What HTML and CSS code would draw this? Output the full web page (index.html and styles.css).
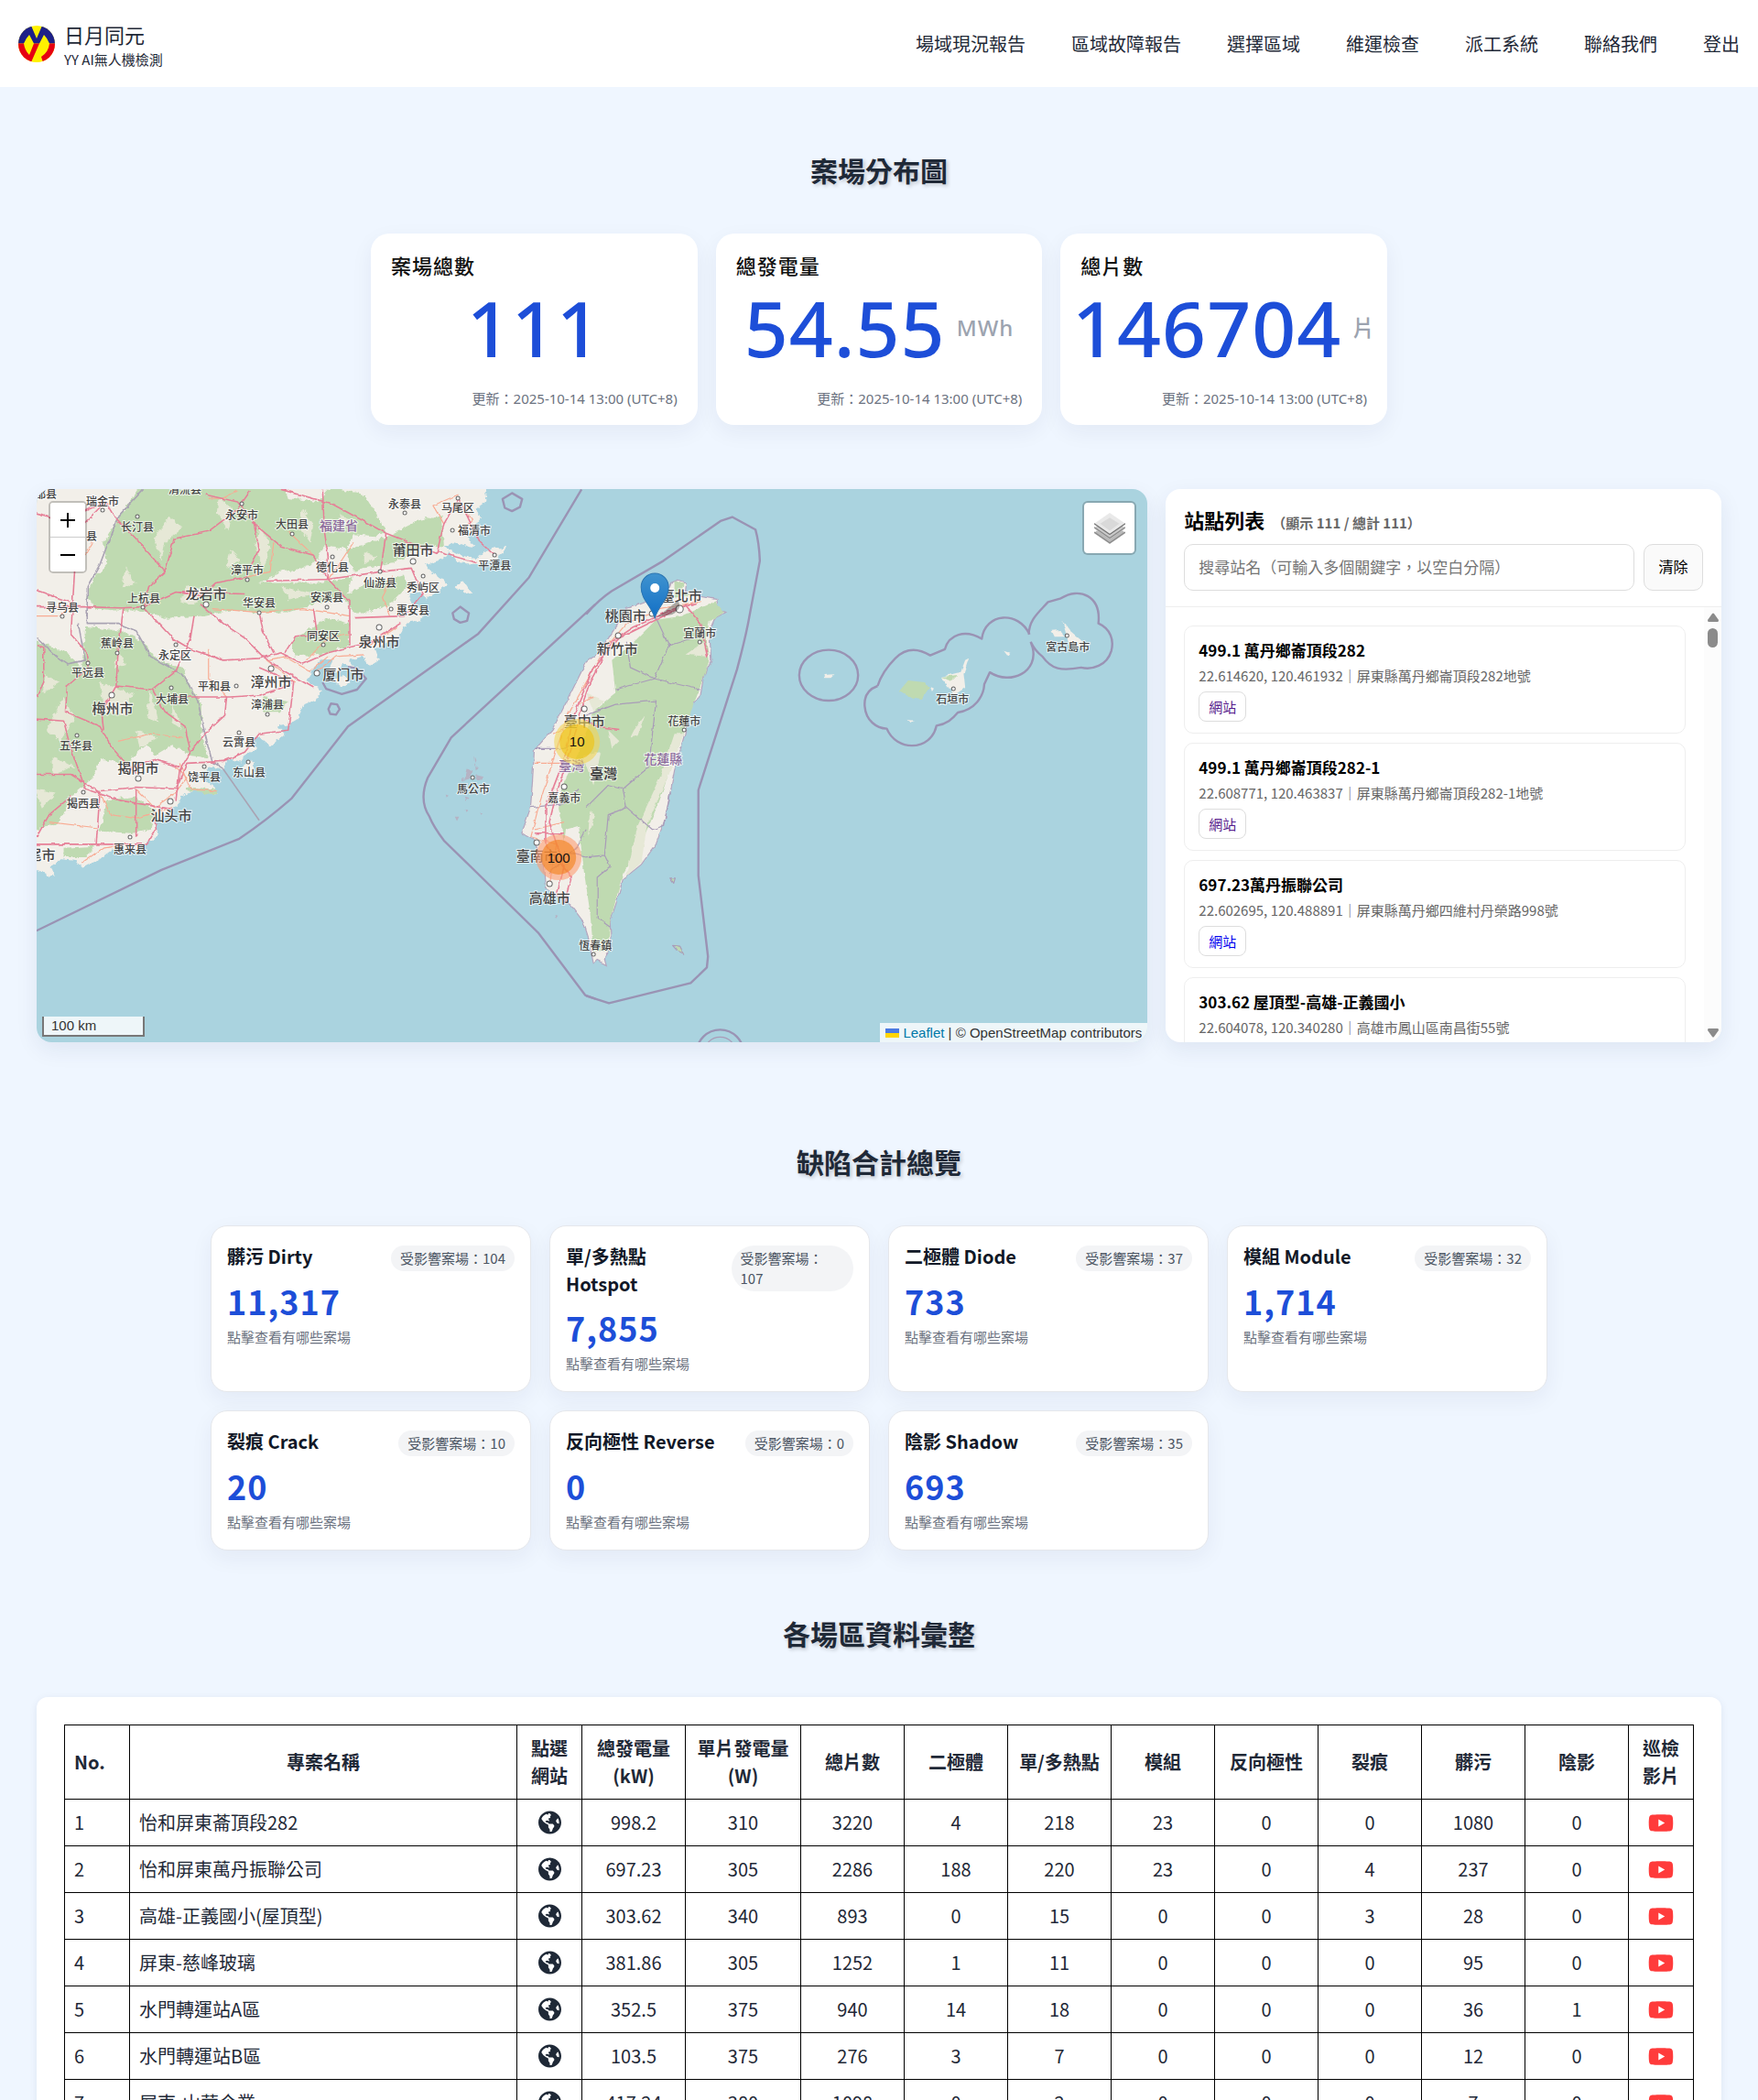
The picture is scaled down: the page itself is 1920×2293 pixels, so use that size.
FILE: index.html
```html
<!DOCTYPE html>
<html lang="zh-Hant">
<head>
<meta charset="UTF-8">
<meta name="viewport" content="width=device-width, initial-scale=1.0">
<title>日月同元 YY AI無人機檢測</title>
<link rel="stylesheet" href="styles.css">
</head>
<body>

<!-- shared icons -->
<svg class="sprite" aria-hidden="true">
    <symbol id="icon-globe" viewBox="0 0 496 512">
        <path d="M248 8C111.03 8 0 119.03 0 256s111.03 248 248 248 248-111.03 248-248S384.97 8 248 8zm82.29 357.6c-3.9 3.88-7.99 7.95-11.31 11.28-2.99 3-5.1 6.7-6.17 10.71-1.51 5.66-2.73 11.38-4.77 16.87l-17.39 46.85c-13.76 3-28 4.69-42.65 4.69v-27.38c1.69-12.62-7.64-36.26-22.63-51.25-6-6-9.37-14.14-9.37-22.63v-32.01c0-11.64-6.27-22.34-16.46-27.97-14.37-7.95-34.81-19.06-48.81-26.11-11.48-5.78-22.1-13.14-31.65-21.75l-.8-.72a114.792 114.792 0 0 1-18.06-20.74c-9.38-13.77-24.66-36.42-34.59-51.14 20.47-45.5 57.36-82.04 103.2-101.89l24.01 12.01C203.48 89.74 216 82.01 216 70.11v-11.3c7.99-1.29 16.12-2.11 24.39-2.42l28.3 28.3c6.25 6.25 6.25 16.38 0 22.63L264 112l-10.34 10.34c-3.12 3.12-3.12 8.19 0 11.31l4.69 4.69c3.12 3.12 3.12 8.19 0 11.31l-8 8a8.008 8.008 0 0 1-5.66 2.34h-8.99c-2.08 0-4.08.81-5.58 2.27l-9.92 9.65a8.008 8.008 0 0 0-1.58 9.31l15.59 31.19c2.66 5.32-1.21 11.58-7.15 11.58h-5.64c-1.93 0-3.79-.7-5.24-1.96l-9.28-8.06a16.017 16.017 0 0 0-15.55-3.1l-31.17 10.39a11.95 11.95 0 0 0-8.17 11.34c0 4.53 2.56 8.66 6.61 10.69l11.08 5.54c9.41 4.71 19.79 7.16 30.31 7.16s22.59 27.29 32 32h66.75c8.49 0 16.62 3.37 22.63 9.37l13.69 13.69a30.503 30.503 0 0 1 8.93 21.57 46.536 46.536 0 0 1-13.72 32.98zM417 274.25c-5.79-1.45-10.84-5-14.15-9.97l-17.98-26.97a23.97 23.97 0 0 1 0-26.62l19.59-29.38c2.32-3.47 5.5-6.29 9.24-8.15l12.98-6.49C440.2 193.59 448 223.87 448 256c0 8.67-.74 17.16-1.82 25.54L417 274.25z"/>
    </symbol>
    <symbol id="icon-youtube" viewBox="0 0 576 512">
        <path d="M549.655 124.083c-6.281-23.65-24.787-42.276-48.284-48.597C458.781 64 288 64 288 64S117.22 64 74.629 75.486c-23.497 6.322-42.003 24.947-48.284 48.597-11.412 42.867-11.412 132.305-11.412 132.305s0 89.438 11.412 132.305c6.281 23.65 24.787 41.5 48.284 47.821C117.22 448 288 448 288 448s170.78 0 213.371-11.486c23.497-6.321 42.003-24.171 48.284-47.821 11.412-42.867 11.412-132.305 11.412-132.305s0-89.438-11.412-132.305zm-317.51 213.508V175.185l142.739 81.205-142.739 81.201z"/>
    </symbol>
</svg>

<header class="navbar">
    <a class="brand" href="#">
        <svg class="brand-logo" viewBox="0 0 40 40" aria-hidden="true">
            <defs><clipPath id="logoClip"><circle cx="20" cy="20" r="20"/></clipPath></defs>
            <g clip-path="url(#logoClip)">
                <rect width="40" height="40" fill="#fff100"/>
                <path d="M0 19.500V0H14L20 14L26 0H40V19.500H34Q32 14 28 10L23 19.500H17L12 10Q8 14 6 19.500Z" fill="#1d2088"/>
                <path d="M0 19.500H6Q7 27 12 32L17 19.500H23L14 40H0ZM34 19.500H40V40H27L25 34Q33 29 34 19.500Z" fill="#e60012"/>
            </g>
        </svg>
        <span class="brand-text">
            <span class="brand-name">日月同元</span>
            <span class="brand-sub">YY AI無人機檢測</span>
        </span>
    </a>
    <nav class="nav-links">
        <a href="#">場域現況報告</a>
        <a href="#">區域故障報告</a>
        <a href="#">選擇區域</a>
        <a href="#">維運檢查</a>
        <a href="#">派工系統</a>
        <a href="#">聯絡我們</a>
        <a href="#">登出</a>
    </nav>
</header>

<main>
    <section class="sites">
        <h2 class="section-title">案場分布圖</h2>

        <div class="stats">
            <div class="stat-card">
                <h3>案場總數</h3>
                <div class="stat-value"><span class="num">111</span></div>
                <div class="stat-time">更新：2025-10-14 13:00 (UTC+8)</div>
            </div>
            <div class="stat-card">
                <h3>總發電量</h3>
                <div class="stat-value"><span class="num">54.55</span><span class="unit">MWh</span></div>
                <div class="stat-time">更新：2025-10-14 13:00 (UTC+8)</div>
            </div>
            <div class="stat-card">
                <h3>總片數</h3>
                <div class="stat-value"><span class="num">146704</span><span class="unit">片</span></div>
                <div class="stat-time">更新：2025-10-14 13:00 (UTC+8)</div>
            </div>
        </div>

        <div class="map-layout">
            <div class="map">
                <svg class="map-canvas" viewBox="0 0 1213 604" preserveAspectRatio="xMidYMid slice" role="img" aria-label="案場地圖">
                    <defs>
                        <filter id="rough" x="-5%" y="-5%" width="110%" height="110%">
                            <feTurbulence type="fractalNoise" baseFrequency="0.06" numOctaves="4" seed="4" result="n"/>
                            <feDisplacementMap in="SourceGraphic" in2="n" scale="16" xChannelSelector="R" yChannelSelector="G"/>
                        </filter>
                        <filter id="wobble" x="-5%" y="-5%" width="110%" height="110%">
                            <feTurbulence type="fractalNoise" baseFrequency="0.05" numOctaves="2" seed="9" result="n"/>
                            <feDisplacementMap in="SourceGraphic" in2="n" scale="9" xChannelSelector="R" yChannelSelector="G"/>
                        </filter>
                        <linearGradient id="pinFill" x1="0" y1="0" x2="0" y2="1">
                            <stop offset="0" stop-color="#3f93cf"/>
                            <stop offset="1" stop-color="#126fc6"/>
                        </linearGradient>
                    </defs>
                    <rect width="1213" height="604" fill="#aad3df"/>

                    <!-- mainland coast -->
                    <g transform="translate(-10 -14) scale(.3954 .4018)">
                        <g filter="url(#rough)">
                            <path class="land" d="M-20 0H1260L1268 70 1240 90 1250 120 1215 165 1235 195 1180 180 1150 190 1195 215 1240 225 1260 205 1290 195 1325 195 1290 225 1250 240 1190 235 1165 205 1150 225 1100 240 1115 265 1150 280 1160 295 1130 315 1100 335 1085 315 1050 320 1060 345 1105 370 1080 395 1045 400 1030 430 1000 450 960 470 970 500 945 515 925 490 890 500 905 520 870 510 860 535 830 530 845 500 820 495 790 520 770 555 812 580 800 605 765 620 745 660 720 675 690 680 710 700 670 735 650 720 640 705 620 715 632 740 600 760 590 775 555 768 540 795 500 790 470 810 520 850 525 865 460 855 425 870 415 890 395 905 355 935 360 980 320 1000 290 1020 240 1010 200 1040 150 1065 135 1045 90 1040 65 1060 75 1090 40 1075 15 1065 -20 1060Z"/>
                            <path class="land" d="M1180 300l25-15 20 30-15 5zM590 790l30-20 5 35-20 15zM840 555l35-15 15 20-25 15z"/>
                        </g>
                        <g filter="url(#rough)" class="wood">
                            <path d="M330 0H700L720 60 800 70 840 30 930 50 990 150 960 165 900 160 880 200 820 190 800 230 760 250 700 260 640 290 800 290 900 275 880 330 800 345 720 370 640 370 560 365 480 380 380 385 300 365 240 365 190 360 165 330 180 280 220 240 210 180 240 130Z"/>
                            <path d="M990 165L1080 120 1145 105 1150 190 1100 190 1010 235 900 255 880 200ZM740 440L830 385 890 400 890 460 830 480 740 490 725 460ZM870 330L940 290 1040 270 1050 300 1000 350 940 370 900 370Z"/>
                            <path d="M0 440L110 480 150 520 160 410 260 420 320 450 360 500 430 520 450 570 480 620 480 700 500 765 450 760 400 730 350 760 330 730 270 780 200 770 180 820 120 870 90 940 0 970ZM220 880L300 870 350 910 340 960 290 970 200 965ZM650 600L720 610 700 640 650 640ZM440 845l85 5v15l-85-8zM100 1010l90-5-30 30-60 0z"/>
                        </g>
                        <g filter="url(#rough)" class="clearing">
                            <path d="M390 110l40 30-50 40-10 50-20-60zM530 60l40 30-15 60-30-50zM640 130l30 60-20 60-20-60zM760 90l30 40-10 50-30-40zM560 200l30 30-40 20zM270 250l30 40-40 15zM440 300l50 10-30 40-40-10zM860 100l30 20-20 20zM700 300l90 20-70 15zM930 210l40 10-40 20z"/>
                            <path d="M200 560l90 30-20 60-60-10zM100 600l30 60-40 60-40-30zM340 580l20 90-30-20zM300 690l60 20-50 30zM70 760l60 30-60 20zM250 470l20 40-30 10zM400 620l30 70-30-20zM20 850l60 10-40 40zM50 540l40 20-50 30z"/>
                        </g>
                        <g filter="url(#wobble)">
                            <path class="province" d="M320 36L250 110 200 240 165 300 165 400 250 400 300 420 340 490 430 540 470 610 490 700 510 775 540 795M25 440L80 490 110 510 160 500 140 400"/>
                            <path class="minor-road" d="M25 380L90 380 125 345M180 180L130 260M500 60L540 60 580 40M680 180L670 260 600 275M720 150L790 215M900 180L860 240 830 280M500 470L500 550 550 600M510 360L640 370 760 360 890 380M740 560L660 500 710 490 780 530 830 490M770 500L830 440 890 430M800 530L850 490 930 485M1010 270L980 330 1000 380M1150 130L1120 80 1190 50M1190 70L1230 120 1200 150M200 860L230 920 300 930 400 900M300 850L350 900 410 860M420 780L450 850 520 855M60 940L190 955M150 1050L210 1010 290 1000M400 870L440 820 410 790M250 720L340 700 430 710M1020 410L930 470"/>
                            <path class="road" d="M25 355H160L260 358 320 355 410 315 480 325 520 290 600 275 640 200 625 125 580 70 490 50M215 70L240 110 300 170 380 260 405 170 500 150 580 90 615 40M380 260L335 300 320 355 400 440 450 470 540 500 640 495 700 480 760 510 830 480 890 465 950 450 1030 400M480 350L540 400 600 440 650 490 710 530 790 575M640 370L650 420 680 480M410 315L600 320M620 125L700 190 790 215 830 280 890 340V460M700 36L840 75 990 155 1130 210 1150 130 1190 60M990 155L975 260 830 280 660 285M815 36L820 150 830 215V280M975 260L1060 250 1090 320 1040 380 905 385M1130 205L1240 235M1190 60L1250 180 1290 215"/>
                            <path class="road" d="M25 310L125 345 130 260 135 150 215 70M125 345L120 430 165 480 170 520 110 570 105 640 200 680 235 740 300 810M265 358L250 480 245 570 205 640 210 690M245 570L345 580 410 530 450 440 460 380M345 580L380 640 435 680 450 750 420 800 410 880M25 660L100 665 120 740 160 850 250 880 400 905M25 810H120L200 860 190 1000M25 1000H330L355 960 350 920M200 855L300 845 410 850 440 780 540 775 600 750 640 700 720 690 735 560 640 520M400 600H560L640 595 720 570M550 600L545 650 490 700 450 750M25 460L45 465V560L25 600M25 980L60 920 120 870M790 360L800 430 740 435 710 480M25 100L100 120 215 70M270 800L350 770 420 790M300 850L300 980"/>
                        </g>
                        <path class="border" d="M25 1235L370 1070 585 985 Q660 935 730 875L885 680 1245 428 1385 275 1530 36M1568 348L1170 710 1105 820Q1080 880 1110 925 1120 950 1150 990L1410 1240 1540 1410 1568 1420M815 560L825 578 868 592 910 580 935 550 910 522 885 518"/>
                        <path class="border" d="M1312 62L1338 46 1366 62 1360 84 1338 95 1318 86ZM1174 372L1195 355 1219 372 1214 393 1195 398 1178 388ZM831 633L838 618 855 620 862 633 852 648 836 646Z"/>
                        <path class="province" d="M540 795L640 935"/>
                        <g filter="url(#wobble)" fill="#b5b3c4">
                            <path d="M1235 760l5 12-6 12 12 8-8 8zM1215 795l12 5-6 22-14 4zM1240 812l20 5-8 8-14-2zM1200 818l8 3-6 8zM1205 870l15 5-10 8zM1180 925l12 0-6 12zM1155 865l8 3-6 5zM1210 905l8 3-6 5zM1250 912l8 3-6 5zM1455 1192l10 2-6 8z"/>
                        </g>
                    </g>

                    <!-- Taiwan and the Yaeyama islands -->
                    <g transform="translate(600 -14) scale(.4018)">
                        <g filter="url(#wobble)">
                            <path class="land" stroke="#b4a6bf" stroke-width="3" d="M250 282L272 290 270 310 300 325 355 335 358 360 380 370 350 385 335 420 340 500 320 540 310 600 285 625 268 700 240 800 215 930 190 1000 150 1055 100 1095 85 1150 65 1210 68 1280 50 1310 55 1328 30 1315 20 1325 5 1250-8 1210-42 1165-111 1120-116 1060-141 990-175 970-151 900-146 830-141 745-92 690-42 590 0 505 35 480 80 410 110 360 180 335 220 320 230 290Z"/>
                            <path class="wood" d="M240 285L265 290 260 310 290 325 240 330ZM190 390L260 380 350 340 375 370 335 395 325 440 335 500 300 600 265 690 200 880 150 1000 100 1080 65 1210 60 1290 20 1290 10 1180-5 1080-20 950-55 960-60 1000-75 900-60 830-20 750 20 640 80 590 70 500 130 450Z"/>
                            <path class="clearing" d="M265 700L225 810 165 950 150 1050 105 1090 115 1060 140 950 200 820 240 700ZM160 650l-30 40-10 20 20-5zM60 690l30 30-20 20zM-10 760l50-10-20 90zM0 590l50 20-30 30zM10 910l15 10-20 60zM320 450l-50 35 60 5z"/>
                            <path class="county" d="M190 385L225 460 185 550 310 580M80 580L185 550M110 450L120 520 185 550M0 650L80 620 190 610 170 790 100 850 60 840 0 900M100 850L110 900 180 960 210 950 230 860M110 900L60 920 50 1030 0 1035-60 1020M50 1030L65 1060 30 1090 30 1200 65 1225M-140 740L-60 740-20 720M-150 900L-60 890-20 850M-100 1080L-20 1000 0 960M225 460L290 440"/>
                            <path class="minor-road" d="M-100 1110L-80 1000-150 980-130 900-80 740-50 650 0 560 50 470 110 400 200 360 310 340M-90 700L-50 680M-20 620L20 600M-140 960L-60 940M-140 780L-60 780"/>
                            <path class="road" d="M-60 1160L-40 1090-110 1000-110 900-60 770-30 640 20 520 90 440 190 390 270 350 310 400 330 490M-80 1140L-60 1060-100 940-80 860-40 740-10 620 10 560 70 450 130 410 240 360 300 345M-10 660L30 680 90 688M-140 970H-60"/>
                            <path class="land" d="M645 540l30-2-10 10h-18zM965 545l60-15 5 45-30 20-15-20-15-20zM1030 500l10-5-15 45-8-5zM1135 475l15 5-5 8zM1265 420l25-2 8 18-25 0zM1295 395l20 25 35 30-10 15-30-15zM872 662l18 2-10 6zM935 572l10 5-5 8zM785 138l12 3zM850 82l8 3z"/>
                            <path fill="#bfdab1" d="M850 585l25-30 45 5 12 15-20 30-35-5zM965 545l45-5-15 15zM240 1272l15 5 12 20-20-8zM230 1093l10 0-2 12z"/>
                            <path class="county" d="M235 1275l20 2 10 20-18-8zM228 1092h14l-4 14z"/>
                        </g>
                        <path class="border" d="M0 375Q35 335 70 312L210 230 365 122 397 111 460 145Q470 180 472 230L440 400Q430 450 410 525L305 853V1085L331 1305 328 1335 284 1377 62 1432 0 1412"/>
                        <ellipse class="border" cx="659" cy="541" rx="80" ry="69"/>
                        <path class="border" d="M792 570C765 580 755 600 757 625 760 665 790 685 817 686 830 718 860 732 885 732 920 732 945 710 952 678 980 673 995 660 1010 642 1055 635 1080 600 1082 565L1097 533C1155 570 1230 530 1213 465L1208 450M1205 430C1175 365 1085 370 1075 442 1030 415 985 430 975 470L935 487C890 460 860 475 840 495 815 520 800 545 792 570M1203 430C1203 390 1230 370 1255 342L1290 332C1340 300 1400 325 1392 400 1425 415 1435 445 1427 475 1415 515 1375 527 1345 520 1290 530 1265 525 1240 490Q1220 475 1208 450"/>
                        <circle class="border" cx="364" cy="1568" r="64"/>
                        <circle class="county" cx="364" cy="1568" r="44"/>
                    </g>

                    <g class="dots">
                        <circle cx="72" cy="23" r="2"/><circle cx="110" cy="30" r="2"/><circle cx="224" cy="16" r="2"/><circle cx="279" cy="49" r="2"/><circle cx="402" cy="26" r="2"/><circle cx="460" cy="10" r="2"/><circle cx="454" cy="45" r="2"/><circle cx="411" cy="79" r="3"/><circle cx="500" cy="72" r="2"/><circle cx="323" cy="74" r="2"/><circle cx="375" cy="90" r="2"/><circle cx="422" cy="95" r="2"/><circle cx="230" cy="99" r="2"/><circle cx="116" cy="129" r="2"/><circle cx="185" cy="126" r="3"/><circle cx="243" cy="135" r="2"/><circle cx="317" cy="129" r="2"/><circle cx="387" cy="131" r="2"/><circle cx="28" cy="139" r="2"/><circle cx="313" cy="170" r="2"/><circle cx="374" cy="151" r="3"/><circle cx="88" cy="179" r="2"/><circle cx="152" cy="170" r="2"/><circle cx="56" cy="190" r="2"/><circle cx="256" cy="196" r="3"/><circle cx="306" cy="201" r="3"/><circle cx="218" cy="215" r="2"/><circle cx="252" cy="246" r="2"/><circle cx="82" cy="225" r="3"/><circle cx="147" cy="217" r="2"/><circle cx="44" cy="269" r="2"/><circle cx="221" cy="266" r="2"/><circle cx="111" cy="316" r="3"/><circle cx="183" cy="303" r="2"/><circle cx="231" cy="298" r="2"/><circle cx="51" cy="331" r="2"/><circle cx="146" cy="341" r="3"/><circle cx="102" cy="380" r="2"/>
                        <circle cx="476" cy="315" r="2"/><circle cx="598" cy="240" r="3"/><circle cx="576" cy="325" r="3"/><circle cx="546" cy="386" r="3"/><circle cx="560" cy="431" r="3"/><circle cx="608" cy="508" r="2"/><circle cx="702" cy="131" r="4"/><circle cx="635" cy="160" r="3"/><circle cx="672" cy="136" r="3"/><circle cx="724" cy="167" r="2"/><circle cx="707" cy="263" r="2"/><circle cx="1001" cy="218" r="2"/><circle cx="1125" cy="160" r="2"/>
                    </g>

                    <g class="labels" transform="translate(0 -1)">
                        <text x="10" y="6">都县</text><text x="72" y="14">瑞金市</text><text x="60" y="52">县</text><text x="110" y="42">长汀县</text><text x="162" y="1">清流县</text><text x="224" y="29">永安市</text><text x="279" y="39">大田县</text><text x="402" y="17">永泰县</text><text x="460" y="21">马尾区</text><text x="478" y="46">福清市</text><text x="500" y="84">平潭县</text><text x="323" y="86">德化县</text><text x="375" y="103">仙游县</text><text x="422" y="108">秀屿区</text><text x="230" y="89">漳平市</text><text x="117" y="120">上杭县</text><text x="243" y="125">华安县</text><text x="317" y="119">安溪县</text><text x="411" y="133">惠安县</text><text x="28" y="130">寻乌县</text><text x="313" y="161">同安区</text><text x="88" y="169">蕉岭县</text><text x="151" y="182">永定区</text><text x="56" y="201">平远县</text><text x="194" y="216">平和县</text><text x="252" y="236">漳浦县</text><text x="148" y="230">大埔县</text><text x="43" y="281">五华县</text><text x="221" y="277">云霄县</text><text x="183" y="315">饶平县</text><text x="232" y="310">东山县</text><text x="51" y="344">揭西县</text><text x="102" y="393">惠来县</text>
                        <text x="477" y="328">馬公市</text><text x="576" y="338">嘉義市</text><text x="610" y="498">恆春鎮</text><text x="724" y="158">宜蘭市</text><text x="707" y="254">花蓮市</text><text x="1126" y="173">宮古島市</text><text x="1000" y="230">石垣市</text>
                    </g>
                    <g class="labels labels-city" transform="translate(0 -1)">
                        <text x="411" y="67">莆田市</text><text x="185" y="115">龙岩市</text><text x="374" y="167">泉州市</text><text x="256" y="211">漳州市</text><text x="335" y="203">厦门市</text><text x="83" y="240">梅州市</text><text x="111" y="305">揭阳市</text><text x="147" y="356">汕头市</text><text x="-2" y="399">汕尾市</text>
                        <text x="598" y="254">臺中市</text><text x="546" y="400">臺南市</text><text x="560" y="446">高雄市</text><text x="704" y="117">臺北市</text><text x="643" y="139">桃園市</text><text x="634" y="175">新竹市</text><text class="strong" x="619" y="311">臺灣</text>
                    </g>
                    <g class="labels labels-area" transform="translate(0 -1)">
                        <text x="330" y="40">福建省</text><text x="584" y="302">臺灣</text><text x="684" y="295">花蓮縣</text>
                    </g>

                    <g class="marker">
                        <path d="M677 140L700 122Q706 130 694 137Z" fill="#000" opacity=".3"/>
                        <path d="M675 141C671 127 660 121 660 107A15 15 0 0 1 690 107C690 121 679 127 675 141Z" fill="url(#pinFill)" stroke="#2b74b0"/>
                        <circle cx="675" cy="108" r="5" fill="#fff"/>
                    </g>
                    <g class="cluster">
                        <circle cx="590" cy="276" r="25" fill="#f1d357" opacity=".6"/>
                        <circle cx="590" cy="276" r="19" fill="#f0c20c" opacity=".6"/>
                        <text x="590" y="276">10</text>
                        <circle cx="570" cy="402" r="25" fill="#fd9c73" opacity=".6"/>
                        <circle cx="570" cy="402" r="19" fill="#f18017" opacity=".6"/>
                        <text x="570" y="402">100</text>
                    </g>
                </svg>

                <div class="zoom-control">
                    <button type="button" aria-label="Zoom in"><svg viewBox="0 0 16 16"><path d="M8 0V16M0 8H16"/></svg></button>
                    <button type="button" aria-label="Zoom out"><svg viewBox="0 0 16 16"><path d="M0 8H16"/></svg></button>
                </div>
                <button class="layers-control" type="button" aria-label="Layers">
                    <svg viewBox="0 0 26 26">
                        <path d="M0 17L13 26 26 17 24 15H2Z" fill="#b9b9b9"/>
                        <path d="M0 16L13 25 26 16" fill="none" stroke="#8a8a8a"/>
                        <path d="M0 13L13 22 26 13 24 11H2Z" fill="#cacaca"/>
                        <path d="M0 12L13 21 26 12" fill="none" stroke="#8a8a8a"/>
                        <path d="M0 9L13 0 26 9 13 18Z" fill="#e9e9e9"/>
                        <path d="M5 9L13 4 21 9 13 15Z" fill="#d9d9d9"/>
                        <path d="M0 9L13 18 26 9" fill="none" stroke="#747474"/>
                    </svg>
                </button>
                <div class="map-scale">100 km</div>
                <div class="attribution">
                    <svg viewBox="0 0 12 8" aria-hidden="true"><path fill="#4c7be1" d="M0 0h12v4H0z"/><path fill="#ffd500" d="M0 4h12v4H0z"/></svg>
                    <a href="#">Leaflet</a> | © OpenStreetMap contributors
                </div>
            </div>

            <aside class="panel">
                <div class="panel-head">
                    <h3>站點列表 <small>（顯示 111 / 總計 111）</small></h3>
                    <div class="search">
                        <input type="text" aria-label="搜尋站名" placeholder="搜尋站名（可輸入多個關鍵字，以空白分隔）">
                        <button type="button">清除</button>
                    </div>
                </div>
                <div class="panel-body">
                    <ul class="station-list">
                        <li>
                            <strong>499.1 萬丹鄉崙頂段282</strong>
                            <span>22.614620, 120.461932｜屏東縣萬丹鄉崙頂段282地號</span>
                            <a class="visited" href="#">網站</a>
                        </li>
                        <li>
                            <strong>499.1 萬丹鄉崙頂段282-1</strong>
                            <span>22.608771, 120.463837｜屏東縣萬丹鄉崙頂段282-1地號</span>
                            <a class="visited" href="#">網站</a>
                        </li>
                        <li>
                            <strong>697.23萬丹振聯公司</strong>
                            <span>22.602695, 120.488891｜屏東縣萬丹鄉四維村丹榮路998號</span>
                            <a href="#">網站</a>
                        </li>
                        <li>
                            <strong>303.62 屋頂型-高雄-正義國小</strong>
                            <span>22.604078, 120.340280｜高雄市鳳山區南昌街55號</span>
                            <a href="#">網站</a>
                        </li>
                    </ul>
                    <div class="scrollbar" aria-hidden="true">
                        <svg viewBox="0 0 12 10"><path d="M5 1Q6 0 7 1L12 8Q12 10 11 10H1Q0 10 0 8Z"/></svg>
                        <div class="thumb"></div>
                        <svg viewBox="0 0 12 10"><path d="M5 9Q6 10 7 9L12 2Q12 0 11 0H1Q0 0 0 2Z"/></svg>
                    </div>
                </div>
            </aside>
        </div>
    </section>

    <section class="defects">
        <h2 class="section-title">缺陷合計總覽</h2>
        <div class="defect-grid">
            <a class="defect-card" href="#">
                <div class="defect-head"><h3>髒污 Dirty</h3><span class="badge">受影響案場：104</span></div>
                <div class="defect-num">11,317</div>
                <div class="hint">點擊查看有哪些案場</div>
            </a>
            <a class="defect-card" href="#">
                <div class="defect-head"><h3>單/多熱點 Hotspot</h3><span class="badge">受影響案場：107</span></div>
                <div class="defect-num">7,855</div>
                <div class="hint">點擊查看有哪些案場</div>
            </a>
            <a class="defect-card" href="#">
                <div class="defect-head"><h3>二極體 Diode</h3><span class="badge">受影響案場：37</span></div>
                <div class="defect-num">733</div>
                <div class="hint">點擊查看有哪些案場</div>
            </a>
            <a class="defect-card" href="#">
                <div class="defect-head"><h3>模組 Module</h3><span class="badge">受影響案場：32</span></div>
                <div class="defect-num">1,714</div>
                <div class="hint">點擊查看有哪些案場</div>
            </a>
            <a class="defect-card" href="#">
                <div class="defect-head"><h3>裂痕 Crack</h3><span class="badge">受影響案場：10</span></div>
                <div class="defect-num">20</div>
                <div class="hint">點擊查看有哪些案場</div>
            </a>
            <a class="defect-card" href="#">
                <div class="defect-head"><h3>反向極性 Reverse</h3><span class="badge">受影響案場：0</span></div>
                <div class="defect-num">0</div>
                <div class="hint">點擊查看有哪些案場</div>
            </a>
            <a class="defect-card" href="#">
                <div class="defect-head"><h3>陰影 Shadow</h3><span class="badge">受影響案場：35</span></div>
                <div class="defect-num">693</div>
                <div class="hint">點擊查看有哪些案場</div>
            </a>
        </div>
    </section>

    <section class="summary">
        <h2 class="section-title">各場區資料彙整</h2>
        <div class="table-box">
            <table>
                <colgroup>
                    <col class="col-narrow"><col><col class="col-narrow"><col class="col-mid"><col class="col-wide">
                    <col class="col-mid" span="8"><col class="col-narrow">
                </colgroup>
                <thead>
                    <tr>
                        <th class="left">No.</th>
                        <th>專案名稱</th>
                        <th>點選<br>網站</th>
                        <th>總發電量<br>(kW)</th>
                        <th>單片發電量<br>(W)</th>
                        <th>總片數</th>
                        <th>二極體</th>
                        <th>單/多熱點</th>
                        <th>模組</th>
                        <th>反向極性</th>
                        <th>裂痕</th>
                        <th>髒污</th>
                        <th>陰影</th>
                        <th>巡檢<br>影片</th>
                    </tr>
                </thead>
                <tbody id="siteRows"></tbody>
            </table>
        </div>
    </section>
</main>

<script src="script.js"></script>
</body>
</html>
```

FILE: styles.css
```css
* {
    box-sizing: border-box;
}
body {
    margin: 0;
    height: 100vh;
    overflow: hidden;
    background-color: #eff6ff;
    color: #1f2937;
    font-family: "Noto Sans CJK TC", sans-serif;
    font-size: 20px;
    line-height: 30px;
}
h2, h3, ul {
    margin: 0;
    padding: 0;
}
a {
    text-decoration: none;
}
button, input {
    font-family: inherit;
}
.sprite {
    display: none;
}

/* navbar */
.navbar {
    display: flex;
    justify-content: space-between;
    align-items: center;
    height: 95px;
    padding: 0 20px;
    background-color: #fff;
}
.brand {
    display: flex;
    align-items: center;
    gap: 10px;
    color: #1f2937;
}
.brand-logo {
    width: 40px;
    height: 40px;
}
.brand-text {
    display: flex;
    flex-direction: column;
    gap: 2px;
    padding-top: 4px;
}
.brand-name {
    font-size: 22px;
    line-height: 28px;
}
.brand-sub {
    font-size: 15px;
    line-height: 24px;
}
.nav-links {
    display: flex;
    gap: 50px;
}
.nav-links a {
    color: #1f2937;
}

.section-title {
    margin-bottom: 47px;
    font-size: 30px;
    line-height: 45px;
    text-align: center;
    text-shadow: 2px 2px 4px rgba(0, 0, 0, 0.2);
}

/* totals */
.sites {
    padding: 68px 40px 0;
}
.stats {
    display: grid;
    grid-template-columns: repeat(3, minmax(0, 1fr));
    gap: 20px;
    max-width: 1110px;
    margin: 0 auto 70px;
    font-family: "Noto Sans", "Noto Sans CJK TC", sans-serif;
}
.stat-card {
    padding: 21px 22px 18px;
    background-color: #fff;
    border-radius: 20px;
    box-shadow: 0 8px 24px rgba(30, 41, 90, 0.06);
}
.stat-card h3 {
    color: #111;
    font-size: 22px;
    font-weight: 500;
    line-height: 28px;
    letter-spacing: 1px;
}
.stat-value {
    display: flex;
    justify-content: center;
    align-items: center;
    gap: 12px;
    height: 108px;
    margin-bottom: 12px;
    white-space: nowrap;
}
.num {
    color: #1d4ed8;
    font-size: 84px;
    font-weight: 500;
    line-height: 108px;
    letter-spacing: 1px;
}
.unit {
    color: #9ca3af;
    font-size: 24px;
    font-weight: 500;
    letter-spacing: 1px;
}
.stat-time {
    color: #6b7280;
    font-size: 15px;
    line-height: 22px;
    text-align: right;
}

/* map */
.map-layout {
    display: grid;
    grid-template-columns: 2fr 1fr;
    gap: 20px;
}
.map, .panel {
    height: 604px;
    border-radius: 16px;
    box-shadow: 0 8px 24px rgba(30, 41, 90, 0.08);
    overflow: hidden;
}
.map {
    position: relative;
    font-family: "Liberation Sans", Arial, sans-serif;
    font-size: 15px;
}
.map-canvas {
    display: block;
    width: 100%;
    height: 100%;
}
.land {
    fill: #f2efe9;
}
.wood {
    fill: #bfdab1;
}
.clearing {
    fill: #e6e8d6;
}
.road, .minor-road, .border, .county, .province {
    fill: none;
    stroke-linejoin: round;
}
.road {
    stroke: #e67f97;
    stroke-width: 4;
}
.minor-road {
    stroke: #f8ab93;
    stroke-width: 3;
}
.border {
    stroke: #9a93b4;
    stroke-width: 6;
}
.county {
    stroke: #a99cb8;
    stroke-width: 3;
}
.province {
    stroke: #a9a3b3;
    stroke-width: 4;
}
.dots circle {
    fill: #fff;
    stroke: #666;
}
.labels {
    fill: #444;
    stroke: rgba(255, 255, 255, 0.7);
    stroke-width: 2px;
    paint-order: stroke;
    font-family: "Noto Sans CJK SC", sans-serif;
    font-size: 12px;
    font-weight: 500;
    text-anchor: middle;
    dominant-baseline: central;
}
.labels-city {
    font-size: 15px;
}
.labels-area {
    fill: #8b6a9c;
    font-size: 14px;
}
.strong {
    font-weight: bold;
}
.cluster text {
    fill: #111;
    text-anchor: middle;
    dominant-baseline: central;
}
.zoom-control {
    position: absolute;
    top: 13px;
    left: 13px;
    border: 2px solid rgba(0, 0, 0, 0.2);
    border-radius: 5px;
    background-clip: padding-box;
}
.zoom-control button {
    display: flex;
    justify-content: center;
    align-items: center;
    width: 38px;
    height: 37px;
    padding: 0;
    border: none;
    background-color: #fff;
}
.zoom-control button:first-child {
    height: 38px;
    border-bottom: 1px solid #ccc;
    border-radius: 3px 3px 0 0;
}
.zoom-control button:last-child {
    border-radius: 0 0 3px 3px;
}
.zoom-control svg {
    width: 16px;
    height: 16px;
    stroke: #000;
    stroke-width: 2;
}
.layers-control {
    position: absolute;
    top: 13px;
    right: 12px;
    display: flex;
    justify-content: center;
    align-items: center;
    width: 59px;
    height: 59px;
    padding: 0;
    border: 2px solid rgba(0, 0, 0, 0.2);
    border-radius: 6px;
    background-color: #fff;
    background-clip: padding-box;
}
.layers-control svg {
    width: 34px;
    height: 34px;
}
.map-scale {
    position: absolute;
    left: 6px;
    bottom: 6px;
    width: 112px;
    padding: 0 8px;
    border: 2px solid #777;
    border-top: none;
    background-color: rgba(255, 255, 255, 0.8);
    color: #333;
    line-height: 20px;
}
.attribution {
    position: absolute;
    right: 0;
    bottom: 0;
    padding: 0 6px;
    background-color: rgba(255, 255, 255, 0.8);
    color: #333;
    line-height: 21px;
}
.attribution svg {
    width: 15px;
    height: 10px;
}
.attribution a {
    color: #0078a8;
}

/* station list */
.panel {
    display: flex;
    flex-direction: column;
    background-color: #fff;
}
.panel-head {
    padding: 17px 20px;
    border-bottom: 1px solid #eee;
}
.panel-head h3 {
    display: flex;
    align-items: baseline;
    gap: 8px;
    height: 32px;
    margin-bottom: 11px;
    color: #000;
    font-size: 22px;
    line-height: 32px;
}
.panel-head small {
    color: #666;
    font-size: 15px;
}
.search {
    display: flex;
    gap: 10px;
}
.search input {
    flex: 1;
    min-width: 0;
    height: 51px;
    padding: 0 15px 3px;
    border: 1px solid #ddd;
    border-radius: 10px;
    font-size: 17px;
}
.search input::placeholder {
    color: #757575;
}
.search button {
    width: 65px;
    padding: 0 0 3px;
    border: 1px solid #ddd;
    border-radius: 10px;
    background-color: #fafafa;
    color: #000;
    font-size: 16px;
}
.panel-body {
    display: flex;
    flex: 1;
    min-height: 0;
}
.station-list {
    display: flex;
    flex: 1;
    flex-direction: column;
    gap: 10px;
    padding: 20px;
    list-style: none;
}
.station-list li {
    display: flex;
    flex-direction: column;
    flex-shrink: 0;
    align-items: flex-start;
    padding: 12px 15px;
    border: 1px solid #eee;
    border-radius: 10px;
}
.station-list strong {
    color: #000;
    font-size: 17px;
    line-height: 28px;
}
.station-list span {
    margin: 2px 0 5px;
    color: #666;
    font-size: 15px;
    line-height: 24px;
}
.station-list a {
    padding: 0 10px;
    border: 1px solid #ddd;
    border-radius: 8px;
    color: #0000ee;
    font-size: 15px;
    line-height: 31px;
}
.station-list a.visited {
    color: #551a8b;
}
.scrollbar {
    display: flex;
    flex-direction: column;
    align-items: center;
    gap: 7px;
    width: 19px;
    padding: 6px 0 5px;
    background-color: #fcfcfc;
}
.scrollbar svg {
    width: 12px;
    height: 10px;
    fill: #8b8b8b;
}
.scrollbar svg:last-child {
    margin-top: auto;
}
.thumb {
    width: 11px;
    height: 21px;
    border-radius: 6px;
    background-color: #8b8b8b;
}

/* defects */
.defects {
    padding: 108px 40px 0;
}
.defect-grid {
    display: grid;
    grid-template-columns: repeat(4, minmax(0, 1fr));
    gap: 20px;
    max-width: 1460px;
    margin: 0 auto;
}
.defect-card {
    padding: 18px 17px 19px;
    background-color: #fff;
    border: 1px solid #e5e7eb;
    border-radius: 18px;
    box-shadow: 0 8px 24px rgba(30, 41, 90, 0.06);
}
.defect-head {
    display: flex;
    justify-content: space-between;
    align-items: baseline;
    gap: 12px;
}
.defect-head h3 {
    color: #111827;
    font-size: 20px;
    line-height: 30px;
}
.badge {
    padding: 3px 10px;
    border-radius: 999px;
    background-color: #f3f4f6;
    color: #4b5563;
    font-size: 15px;
    line-height: 22px;
}
.defect-num {
    margin: 5px 0 1px;
    color: #1d4ed8;
    font-size: 36px;
    font-weight: bold;
    line-height: 54px;
    letter-spacing: 1px;
}
.hint {
    color: #6b7280;
    font-size: 15px;
    line-height: 23px;
}

/* summary table */
.summary {
    padding: 68px 40px 0;
}
.table-box {
    padding: 30px;
    background-color: #fff;
    border-radius: 12px;
    box-shadow: 0 2px 8px rgba(30, 41, 90, 0.08);
}
table {
    width: 100%;
    table-layout: fixed;
    border-collapse: collapse;
}
.col-narrow {
    width: 71px;
}
.col-mid {
    width: 113px;
}
.col-wide {
    width: 126px;
}
th, td {
    padding: 10px 0;
    border: 1px solid #000;
    text-align: center;
}
th.left, td.left {
    padding-left: 10px;
    text-align: left;
}
td svg {
    display: block;
    margin: 0 auto;
}
.icon-globe {
    width: 25px;
    height: 26px;
    fill: #1f2937;
}
.icon-youtube {
    width: 28px;
    height: 25px;
    fill: #ff3b3b;
}
```

FILE: script.js
```js
// name, total kW, panel W, panels, diode, hotspot, module, reverse, crack, dirty, shadow
const sites = [
    ['怡和屏東菕頂段282', 998.2, 310, 3220, 4, 218, 23, 0, 0, 1080, 0],
    ['怡和屏東萬丹振聯公司', 697.23, 305, 2286, 188, 220, 23, 0, 4, 237, 0],
    ['高雄-正義國小(屋頂型)', 303.62, 340, 893, 0, 15, 0, 0, 3, 28, 0],
    ['屏東-慈峰玻璃', 381.86, 305, 1252, 1, 11, 0, 0, 0, 95, 0],
    ['水門轉運站A區', 352.5, 375, 940, 14, 18, 0, 0, 0, 36, 1],
    ['水門轉運站B區', 103.5, 375, 276, 3, 7, 0, 0, 0, 12, 0],
    ['屏東-山華企業', 417.24, 380, 1098, 0, 2, 0, 0, 0, 7, 0]
];

const siteRows = document.getElementById('siteRows');
sites.forEach(function(site, index) {
    const [name, ...values] = site;
    const row = document.createElement('tr');
    row.innerHTML = `
        <td class="left">${index + 1}</td>
        <td class="left">${name}</td>
        <td><a href="#" aria-label="網站"><svg class="icon-globe"><use href="#icon-globe"/></svg></a></td>
        ${values.map(value => `<td>${value}</td>`).join('')}
        <td><a href="#" aria-label="影片"><svg class="icon-youtube"><use href="#icon-youtube"/></svg></a></td>
    `;
    siteRows.appendChild(row);
});
```
